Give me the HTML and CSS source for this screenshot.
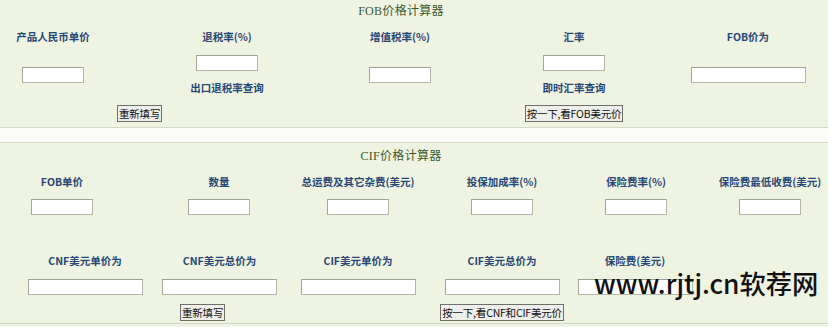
FILE: index.html
```html
<!DOCTYPE html>
<html lang="zh-CN">
<head>
<meta charset="utf-8">
<title>FOB/CIF价格计算器</title>
<link rel="stylesheet" href="styles.css">
</head>
<body>
<section class="panel fob">
  <h2 class="title">FOB价格计算器</h2>
  <div class="grid fob-grid">
    <div class="cell"><span class="label">产品人民币单价</span></div>
    <div class="cell"><span class="label">退税率(%)</span></div>
    <div class="cell"><span class="label">增值税率(%)</span></div>
    <div class="cell"><span class="label">汇率</span></div>
    <div class="cell"><span class="label">FOB价为</span></div>

    <div class="cell"><input class="box"></div>
    <div class="cell stack"><input class="box"><a class="link">出口退税率查询</a></div>
    <div class="cell"><input class="box"></div>
    <div class="cell stack"><input class="box"><a class="link">即时汇率查询</a></div>
    <div class="cell"><input class="box wide"></div>

    <div class="cell btn-a"><button class="btn">重新填写</button></div>
    <div class="cell btn-b"><button class="btn">按一下,看FOB美元价</button></div>
  </div>
</section>
<div class="band"></div>
<section class="panel cif">
  <h2 class="title">CIF价格计算器</h2>
  <div class="grid cif-grid1">
    <div class="cell"><span class="label">FOB单价</span></div>
    <div class="cell"><span class="label">数量</span></div>
    <div class="cell"><span class="label">总运费及其它杂费(美元)</span></div>
    <div class="cell"><span class="label">投保加成率(%)</span></div>
    <div class="cell"><span class="label">保险费率(%)</span></div>
    <div class="cell"><span class="label">保险费最低收费(美元)</span></div>

    <div class="cell"><input class="box"></div>
    <div class="cell"><input class="box"></div>
    <div class="cell"><input class="box"></div>
    <div class="cell"><input class="box"></div>
    <div class="cell"><input class="box"></div>
    <div class="cell"><input class="box"></div>
  </div>
  <div class="grid cif-grid2">
    <div class="cell"><span class="label">CNF美元单价为</span></div>
    <div class="cell"><span class="label">CNF美元总价为</span></div>
    <div class="cell"><span class="label">CIF美元单价为</span></div>
    <div class="cell"><span class="label">CIF美元总价为</span></div>
    <div class="cell"><span class="label">保险费(美元)</span></div>

    <div class="cell"><input class="box wide"></div>
    <div class="cell"><input class="box wide"></div>
    <div class="cell"><input class="box wide"></div>
    <div class="cell"><input class="box wide"></div>
    <div class="cell"><input class="box wide"></div>

    <div class="cell btn-c"><button class="btn">重新填写</button></div>
    <div class="cell btn-d"><button class="btn">按一下,看CNF和CIF美元价</button></div>
  </div>
</section>
<div class="watermark">www.rjtj.cn软荐网</div>
</body>
</html>
```
FILE: styles.css
```css
html, body {
  margin: 0;
  padding: 0;
}
body {
  width: 828px;
  height: 327px;
  overflow: hidden;
  position: relative;
  background: #eff3e2;
  font-family: "Liberation Serif", "Noto Sans CJK SC", serif;
}
.panel {
  overflow: hidden;
  background: #eff3e2;
}
.fob {
  height: 127px;
  border-bottom: 1px solid #d6dac8;
}
.band {
  height: 14px;
  background: #fcfdf8;
}
.cif {
  height: 180px;
  border-top: 1px solid #d6dac8;
  border-bottom: 1px solid #d6dac8;
}
.title {
  width: 802px;
  margin: 0;
  text-align: center;
  font-size: 12px;
  font-weight: normal;
  color: #3c5a2c;
  letter-spacing: 0.3px;
}
.fob .title {
  height: 24px;
  line-height: 22px;
}
.cif .title {
  height: 26px;
  line-height: 26px;
}
.grid {
  display: grid;
}
.cell {
  display: flex;
  flex-direction: column;
  align-items: center;
  justify-content: center;
  min-width: 0;
}
.stack {
  justify-content: flex-start;
  padding-top: 5px;
  gap: 11px;
}
.label,
.link {
  white-space: nowrap;
  font-family: "Noto Sans CJK SC", sans-serif;
  font-size: 10.5px;
  font-weight: 700;
  color: #274776;
  line-height: 12px;
}
.box {
  box-sizing: border-box;
  flex: none;
  width: 62px;
  height: 16px;
  margin: 0;
  padding: 0;
  background: #ffffff;
  border: 1px solid #b3b6a8;
  border-top-color: #9ea294;
  border-left-color: #a3a798;
}
.box.wide {
  width: 115px;
}
.btn {
  flex: none;
  white-space: nowrap;
  box-sizing: border-box;
  height: 17px;
  margin: 0;
  padding: 0 1px;
  font-family: "Noto Sans CJK SC", sans-serif;
  font-size: 10.5px;
  letter-spacing: -0.2px;
  line-height: 13px;
  color: #111;
  background: #eeeeea;
  border: 1px solid #6f6f6a;
  border-radius: 0;
}

/* FOB: column centres 53 / 227 / 400 / 574 / 748 */
.fob-grid {
  grid-template-columns: 106px 242px 104px 244px 104px;
  grid-template-rows: 26px 50px 27px;
}
.btn-a {
  grid-column: 1 / 3;
  align-items: flex-start;
  padding-left: 117px;
}
.btn-b {
  grid-column: 4 / 5;
}

/* CIF row 1: centres 62 / 219 / 358 / 502 / 636 / 770 */
.cif-grid1 {
  width: 870px;
  grid-template-columns: 124px 190px 88px 200px 68px 200px;
  grid-template-rows: 26px 24px;
  margin-bottom: 29px;
}
/* CIF row 2: centres 85 / 219 / 358 / 502 / 635 */
.cif-grid2 {
  grid-template-columns: 170px 99px 178px 110px 156px;
  grid-template-rows: 26px 25px 24px;
}
.btn-c {
  grid-column: 1 / 3;
  align-items: flex-start;
  justify-content: flex-end;
  padding-left: 180px;
  padding-bottom: 2px;
}
.btn-d {
  grid-column: 4 / 5;
  justify-content: flex-end;
  padding-bottom: 2px;
}
.watermark {
  position: absolute;
  left: 594px;
  top: 270px;
  font-family: "Noto Sans CJK SC", sans-serif;
  font-size: 26.3px;
  font-weight: 500;
  line-height: 26px;
  color: #111;
  white-space: nowrap;
}
```
